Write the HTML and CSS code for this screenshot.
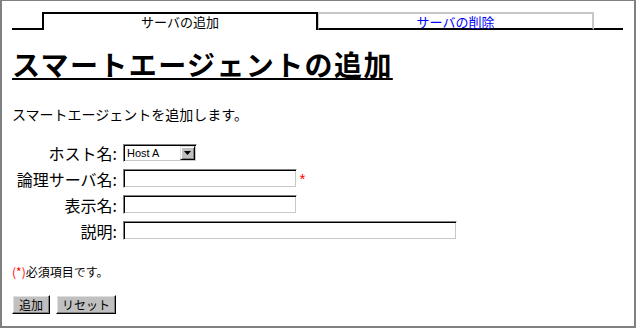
FILE: index.html
```html
<!DOCTYPE html>
<html lang="ja">
<head>
<meta charset="utf-8">
<title>スマートエージェントの追加</title>
<link rel="stylesheet" href="styles.css">
</head>
<body>
<div class="frame">
  <div class="tabs">
    <div class="tab-spacer"></div>
    <div class="tab tab-active">サーバの追加</div>
    <div class="tab tab-inactive"><a href="#">サーバの削除</a></div>
    <div class="tab-spacer tab-fill"></div>
  </div>
  <h1 class="title">スマートエージェントの追加</h1>
  <p class="intro">スマートエージェントを追加します。</p>
  <form class="form">
    <label class="lbl">ホスト名:</label>
    <div class="field">
      <div class="select">
        <span class="select-value">Host A</span>
        <span class="select-btn"><svg width="7" height="4" viewBox="0 0 7 4"><path d="M0 0H7L3.5 4Z" fill="#000"/></svg></span>
      </div>
    </div>
    <label class="lbl">論理サーバ名:</label>
    <div class="field"><input class="input" type="text"><span class="req">*</span></div>
    <label class="lbl">表示名:</label>
    <div class="field"><input class="input" type="text"></div>
    <label class="lbl">説明:</label>
    <div class="field"><input class="input input-wide" type="text"></div>
  </form>
  <p class="note"><span class="req-note">(*)</span>必須項目です。</p>
  <div class="buttons">
    <button class="btn btn-add" type="button">追加</button>
    <button class="btn btn-reset" type="button">リセット</button>
  </div>
</div>
</body>
</html>
```
FILE: styles.css
```css
html, body {
  margin: 0;
  padding: 0;
  background: #fff;
}
body {
  font-family: "Noto Sans CJK JP", "Liberation Sans", sans-serif;
  color: #000;
}
.frame {
  box-sizing: border-box;
  width: 636px;
  height: 328px;
  border-style: solid;
  border-color: #808080;
  border-width: 1px 2px 2px 2px;
  padding: 11px 11px 0 10px;
}
.tabs {
  display: flex;
  height: 18px;
}
.tab-spacer {
  width: 30px;
  border-bottom: 2px solid #000;
}
.tab-fill {
  flex: 1;
}
.tab {
  box-sizing: border-box;
  width: 276px;
  font-size: 13px;
  line-height: 14px;
  text-align: center;
}
.tab-active {
  border: 2px solid #000;
  border-bottom: none;
  padding-top: 1px;
}
.tab-inactive {
  border-style: solid;
  border-color: #c8c8c8;
  border-width: 2px 2px 0 1px;
  border-bottom: 2px solid #000;
  padding-top: 1px;
}
.tab-inactive a {
  color: #0000ff;
  text-decoration: none;
}
.title {
  margin: 18px 0 0 0;
  font-size: 28px;
  line-height: 32px;
  font-weight: bold;
  letter-spacing: 1.4px;
  text-decoration: underline;
  text-decoration-thickness: 2px;
  text-underline-offset: 2px;
  display: inline-block;
}
.intro {
  margin: 25px 0 0 0;
  font-size: 14px;
  line-height: 16px;
}
.form {
  margin: 22px 0 0 0;
  display: grid;
  grid-template-columns: 107px auto;
  column-gap: 4px;
  row-gap: 7px;
  align-items: center;
}
.lbl {
  text-align: right;
  font-size: 16px;
  line-height: 18px;
  padding-right: 2px;
}
.field {
  display: flex;
  align-items: flex-start;
}
.input {
  box-sizing: border-box;
  width: 174px;
  height: 19px;
  margin: 0;
  padding: 0 2px;
  border: 1px solid;
  border-color: #808080 #fff #fff #808080;
  box-shadow: inset 1px 1px 0 #000, inset -1px -1px 0 #c8c8c8;
  background: #fff;
  font-size: 12px;
  outline: none;
}
.input-wide {
  width: 334px;
}
.req {
  box-sizing: border-box;
  height: 19px;
  padding-top: 7px;
  color: #ff0000;
  font-family: "Liberation Mono", monospace;
  font-size: 15px;
  line-height: 12px;
  margin-left: 1px;
}
.select {
  box-sizing: border-box;
  width: 74px;
  height: 18px;
  display: flex;
  align-items: center;
  justify-content: space-between;
  border: 1px solid;
  border-color: #808080 #fff #fff #808080;
  box-shadow: inset 1px 1px 0 #000, inset -1px -1px 0 #c8c8c8;
  padding: 1px 1px 1px 3px;
}
.select-value {
  font-family: "Liberation Sans", sans-serif;
  font-size: 11px;
  line-height: 13px;
}
.select-btn {
  box-sizing: border-box;
  width: 15px;
  height: 14px;
  background: #c0c0c0;
  border: 1px solid;
  border-color: #dfdfdf #000 #000 #dfdfdf;
  box-shadow: inset 1px 1px 0 #fff, inset -1px -1px 0 #808080;
  display: flex;
  align-items: center;
  justify-content: center;
}
.note {
  margin: 25px 0 0 0;
  font-size: 12px;
  line-height: 14px;
}
.req-note {
  color: #ff0000;
}
.buttons {
  margin-top: 16px;
  display: flex;
  gap: 6px;
}
.btn {
  box-sizing: border-box;
  height: 19px;
  margin: 0;
  padding: 0;
  background: #c0c0c0;
  border: 1px solid;
  border-color: #fff #000 #000 #fff;
  box-shadow: inset -1px -1px 0 #808080, inset 1px 1px 0 #dfdfdf;
  font-family: "Noto Sans CJK JP", sans-serif;
  font-size: 12px;
  line-height: 15px;
  color: #000;
}
.btn-add {
  width: 38px;
}
.btn-reset {
  width: 60px;
}
```
